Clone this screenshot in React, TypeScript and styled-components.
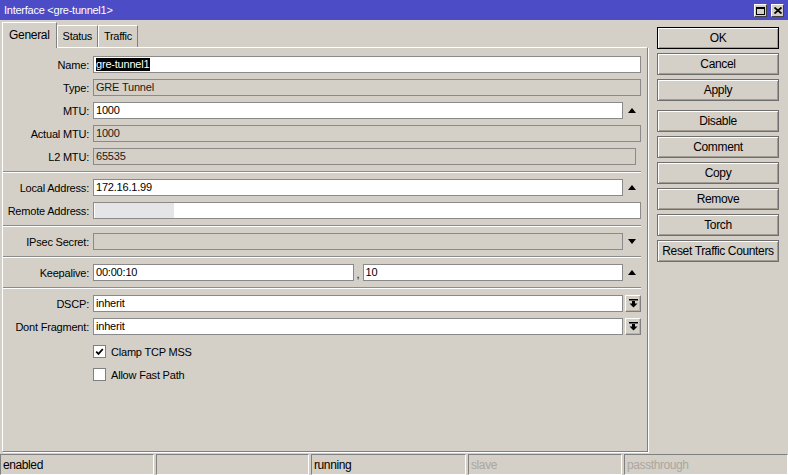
import React from "react";
import styled, { createGlobalStyle } from "styled-components";

const GlobalStyle = createGlobalStyle`
  html, body {
    margin: 0;
    padding: 0;
    background: #d4d0c8;
  }
  body {
    font-family: "Liberation Sans", Arial, sans-serif;
    font-size: 11px;
    letter-spacing: -0.2px;
    color: #000;
  }
  * {
    box-sizing: border-box;
  }
`;

const Window = styled.div`
  width: 788px;
  height: 475px;
  display: flex;
  flex-direction: column;
  background: #d4d0c8;
  overflow: hidden;
`;

const TitleBar = styled.div`
  height: 20px;
  flex: none;
  background: #4c4cc6;
  color: #fff;
  display: flex;
  align-items: center;
  justify-content: space-between;
  padding: 0 4px 0 4px;
  letter-spacing: -0.25px;
`;

const TitleButtons = styled.div`
  display: flex;
  gap: 4px;
  margin-top: 1px;
`;

const TitleButton = styled.div`
  width: 13px;
  height: 13px;
  background: #d4d0c8;
  border: 1px solid;
  border-color: #fff #404040 #404040 #fff;
  display: flex;
  align-items: center;
  justify-content: center;
`;

const Body = styled.div`
  flex: 1;
  display: flex;
  min-height: 0;
`;

const Main = styled.div`
  width: 648px;
  display: flex;
  flex-direction: column;
`;

const TabStrip = styled.div`
  height: 27px;
  flex: none;
  display: flex;
  align-items: flex-end;
  padding-left: 2px;
`;

const Tab = styled.div<{ $active?: boolean }>`
  height: ${(p) => (p.$active ? 26 : 22)}px;
  padding: 0 ${(p) => (p.$active ? 6 : 5)}px;
  padding-top: ${(p) => (p.$active ? 5 : 4)}px;
  border-top: 1px solid #fff;
  border-left: 1px solid #fff;
  border-right: 1px solid #808080;
  background: #d4d0c8;
  margin-bottom: ${(p) => (p.$active ? -1 : 0)}px;
  position: relative;
  z-index: ${(p) => (p.$active ? 1 : 0)};
  font-size: ${(p) => (p.$active ? 12 : 11)}px;
  letter-spacing: -0.3px;
`;

const Panel = styled.div`
  flex: 1;
  margin: 0 0 1px 2px;
  border-top: 1px solid #fff;
  border-left: 1px solid #fff;
  border-right: 1px solid #808080;
  border-bottom: 1px solid #808080;
  box-shadow: 1px 1px 0 #fff;
  padding: 8px 6px 0 0;
`;

const Form = styled.div`
  display: flex;
  flex-direction: column;
  gap: 6px;
`;

const Row = styled.div<{ $offset?: number }>`
  height: 17px;
  display: flex;
  align-items: center;
  margin-top: ${(p) => p.$offset ?? 0}px;
`;

const Label = styled.div`
  width: 86px;
  text-align: right;
  margin-right: 4px;
  white-space: nowrap;
`;

const Field = styled.div<{ $disabled?: boolean; $inset?: number }>`
  flex: 1;
  height: 17px;
  border: 1px solid #8a8a8a;
  background: ${(p) => (p.$disabled ? "#d4d0c8" : "#fff")};
  color: ${(p) => (p.$disabled ? "#1a1a1a" : "#000")};
  padding-left: 2px;
  line-height: 15px;
  white-space: nowrap;
  overflow: hidden;
  margin-right: ${(p) => p.$inset ?? 0}px;
  display: flex;
  align-items: center;
`;

const Selected = styled.span`
  background: #000;
  color: #fff;
  line-height: 13px;
  padding-right: 1px;
`;

const Masked = styled.span`
  width: 79px;
  align-self: stretch;
  margin-left: -1px;
  background: #e5e5e8;
`;

const Comma = styled.span`
  width: 9px;
  text-align: center;
  align-self: flex-end;
  line-height: 14px;
`;

const ArrowSlot = styled.div`
  width: 18px;
  height: 17px;
  display: flex;
  align-items: center;
  justify-content: center;
`;

const Triangle = styled.div<{ $down?: boolean }>`
  width: 0;
  height: 0;
  border-left: 4px solid transparent;
  border-right: 4px solid transparent;
  ${(p) =>
    p.$down ? "border-top: 5px solid #000;" : "border-bottom: 5px solid #000;"}
`;

const DropButton = styled.div`
  width: 16px;
  height: 17px;
  margin-left: 2px;
  background: #d4d0c8;
  border: 1px solid;
  border-color: #fff #808080 #808080 #fff;
  box-shadow: inset -1px -1px 0 #b8b4ac;
  display: flex;
  align-items: center;
  justify-content: center;
`;

const Separator = styled.div`
  height: 2px;
  border-top: 1px solid #8c8c8c;
  border-bottom: 1px solid #fff;
`;

const CheckRow = styled.label<{ $offset?: number }>`
  height: 17px;
  display: flex;
  align-items: center;
  padding-left: 90px;
  margin-top: ${(p) => p.$offset ?? 0}px;
`;

const Box = styled.span`
  width: 13px;
  height: 13px;
  border: 1px solid #808080;
  background: #fff;
  display: flex;
  align-items: center;
  justify-content: center;
  margin-right: 5px;
`;

const Side = styled.div`
  flex: 1;
  padding: 7px 0 0 9px;
  display: flex;
  flex-direction: column;
  gap: 4px;
`;

const Button = styled.div<{ $default?: boolean; $spaced?: boolean }>`
  width: 122px;
  height: 22px;
  flex: none;
  display: flex;
  align-items: center;
  justify-content: center;
  background: #d4d0c8;
  border: 1px solid ${(p) => (p.$default ? "#000" : "#6e6e6e")};
  box-shadow: inset 1px 1px 0 #fff, inset -1px -1px 0 #a09c94;
  margin-top: ${(p) => (p.$spaced ? 5 : 0)}px;
  font-size: 12px;
  letter-spacing: -0.35px;
`;

const StatusBar = styled.div`
  height: 22px;
  flex: none;
  display: flex;
  gap: 2px;
  padding-top: 1px;
`;

const StatusCell = styled.div<{ $width?: number; $dim?: boolean }>`
  ${(p) => (p.$width ? `width: ${p.$width}px; flex: none;` : "flex: 1;")}
  border-top: 1px solid #808080;
  border-left: 1px solid #808080;
  border-bottom: 1px solid #fff;
  border-right: 1px solid #fff;
  padding-left: 2px;
  display: flex;
  align-items: center;
  color: ${(p) => (p.$dim ? "#aaa7a0" : "#000")};
  font-size: 12px;
  letter-spacing: -0.4px;
`;

const MaximizeIcon = () => (
  <svg width="9" height="8" viewBox="0 0 9 8">
    <rect x="0.5" y="0.5" width="8" height="7" fill="none" stroke="#000" />
    <rect x="0" y="0" width="9" height="2" fill="#000" />
  </svg>
);

const CloseIcon = () => (
  <svg width="8" height="7" viewBox="0 0 8 7">
    <path d="M0.5 0.5 L7.5 6.5 M7.5 0.5 L0.5 6.5" stroke="#000" strokeWidth="1.8" />
  </svg>
);

const DropIcon = () => (
  <svg width="9" height="9" viewBox="0 0 9 9">
    <rect x="0" y="0" width="9" height="1.5" fill="#000" />
    <rect x="3" y="2" width="3" height="3" fill="#000" />
    <path d="M0.5 4.5 H8.5 L4.5 8.5 Z" fill="#000" />
  </svg>
);

const CheckIcon = () => (
  <svg width="9" height="9" viewBox="0 0 9 9">
    <path d="M1.2 4.6 L3.5 6.9 L7.8 2" fill="none" stroke="#000" strokeWidth="1.7" />
  </svg>
);

const Up = () => (
  <ArrowSlot>
    <Triangle />
  </ArrowSlot>
);

const Down = () => (
  <ArrowSlot>
    <Triangle $down />
  </ArrowSlot>
);

const buttons = [
  "OK",
  "Cancel",
  "Apply",
  "Disable",
  "Comment",
  "Copy",
  "Remove",
  "Torch",
  "Reset Traffic Counters",
];

export default function App() {
  return (
    <>
      <GlobalStyle />
      <Window>
        <TitleBar>
          <span>Interface &lt;gre-tunnel1&gt;</span>
          <TitleButtons>
            <TitleButton>
              <MaximizeIcon />
            </TitleButton>
            <TitleButton>
              <CloseIcon />
            </TitleButton>
          </TitleButtons>
        </TitleBar>
        <Body>
          <Main>
            <TabStrip>
              <Tab $active>General</Tab>
              <Tab>Status</Tab>
              <Tab>Traffic</Tab>
            </TabStrip>
            <Panel>
              <Form>
                <Row>
                  <Label>Name:</Label>
                  <Field>
                    <Selected>gre-tunnel1</Selected>
                  </Field>
                </Row>
                <Row>
                  <Label>Type:</Label>
                  <Field $disabled>GRE Tunnel</Field>
                </Row>
                <Row>
                  <Label>MTU:</Label>
                  <Field>1000</Field>
                  <Up />
                </Row>
                <Row>
                  <Label>Actual MTU:</Label>
                  <Field $disabled>1000</Field>
                </Row>
                <Row>
                  <Label>L2 MTU:</Label>
                  <Field $disabled $inset={5}>
                    65535
                  </Field>
                </Row>
                <Separator />
                <Row>
                  <Label>Local Address:</Label>
                  <Field>172.16.1.99</Field>
                  <Up />
                </Row>
                <Row>
                  <Label>Remote Address:</Label>
                  <Field>
                    <Masked />
                  </Field>
                </Row>
                <Separator />
                <Row>
                  <Label>IPsec Secret:</Label>
                  <Field $disabled />
                  <Down />
                </Row>
                <Separator />
                <Row>
                  <Label>Keepalive:</Label>
                  <Field>00:00:10</Field>
                  <Comma>,</Comma>
                  <Field>10</Field>
                  <Up />
                </Row>
                <Separator />
                <Row>
                  <Label>DSCP:</Label>
                  <Field>inherit</Field>
                  <DropButton>
                    <DropIcon />
                  </DropButton>
                </Row>
                <Row>
                  <Label>Dont Fragment:</Label>
                  <Field>inherit</Field>
                  <DropButton>
                    <DropIcon />
                  </DropButton>
                </Row>
                <CheckRow $offset={2}>
                  <Box>
                    <CheckIcon />
                  </Box>
                  Clamp TCP MSS
                </CheckRow>
                <CheckRow>
                  <Box />
                  Allow Fast Path
                </CheckRow>
              </Form>
            </Panel>
          </Main>
          <Side>
            {buttons.map((b, i) => (
              <Button key={b} $default={i === 0} $spaced={b === "Disable"}>
                {b}
              </Button>
            ))}
          </Side>
        </Body>
        <StatusBar>
          <StatusCell $width={154}>enabled</StatusCell>
          <StatusCell $width={153} />
          <StatusCell $width={155}>running</StatusCell>
          <StatusCell $width={154} $dim>
            slave
          </StatusCell>
          <StatusCell $dim>passthrough</StatusCell>
        </StatusBar>
      </Window>
    </>
  );
}
